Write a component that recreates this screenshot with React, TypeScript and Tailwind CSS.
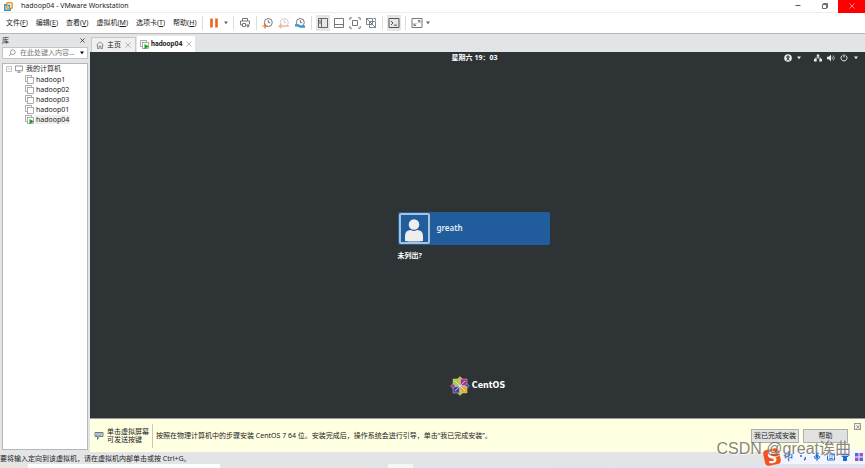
import { useState, ReactNode } from "react"

const menus = [
  { label: "文件", hotkey: "F" },
  { label: "编辑", hotkey: "E" },
  { label: "查看", hotkey: "V" },
  { label: "虚拟机", hotkey: "M" },
  { label: "选项卡", hotkey: "T" },
  { label: "帮助", hotkey: "H" },
]

const machines = ["hadoop1", "hadoop02", "hadoop03", "hadoop01", "hadoop04"]

type SvgProps = {
  children: ReactNode
  className?: string
  box?: string
}

function Svg({ children, className = "size-3", box = "0 0 12 12" }: SvgProps) {
  return (
    <svg viewBox={box} className={`shrink-0 ${className}`} fill="none" stroke="currentColor" strokeWidth="1" aria-hidden="true">
      {children}
    </svg>
  )
}

function Caret({ className = "text-[#666]" }: { className?: string }) {
  return (
    <Svg className={`h-1 w-1.5 ${className}`} box="0 0 6 4">
      <path d="M1 .5h4L3 3.2z" fill="currentColor" stroke="none" />
    </Svg>
  )
}

function Cross({ className = "size-1.5 text-[#aaa]" }: { className?: string }) {
  return (
    <Svg className={className} box="0 0 6 6">
      <path d="M.5.5l5 5M5.5.5l-5 5" strokeWidth=".9" />
    </Svg>
  )
}

function VmIcon({ running = false }: { running?: boolean }) {
  return (
    <Svg className="size-[9px] text-[#888]" box="0 0 9 9">
      <path d="M2 6.5H.5v-6h6V2" strokeWidth=".7" />
      <rect x="2.5" y="2.5" width="6" height="6" fill="#fff" strokeWidth=".7" />
      {running && <path d="M4.5 4L9 6.5 4.5 9z" fill="#18a018" stroke="none" />}
    </Svg>
  )
}

function Clock({ children, className = "text-[#777]" }: { children?: ReactNode; className?: string }) {
  return (
    <Svg className={`size-3 ${className}`}>
      <circle cx="6.3" cy="5.5" r="4" />
      <path d="M6.3 3v2.7h2" />
      {children}
    </Svg>
  )
}

type ToolProps = {
  label: string
  children: ReactNode
  active?: boolean
}

function Tool({ label, children, active = false }: ToolProps) {
  return (
    <button
      type="button"
      aria-label={label}
      className={`flex h-4 items-center justify-center ${active ? "mx-px w-3.5 bg-[#e6e6e6]" : "w-4"}`}
    >
      {children}
    </button>
  )
}

function Divider() {
  return <span className="mx-[3px] h-3.5 w-px shrink-0 bg-[#ddd]" />
}

function TitleBar() {
  return (
    <header className="flex h-[13px] shrink-0 items-center border-b border-[#eee] bg-white pl-1">
      <Svg className="size-[9px]" box="0 0 9 9">
        <rect x="2.8" y=".8" width="5.4" height="5.4" rx=".8" stroke="#f3981c" strokeWidth="1.5" />
        <path d="M2.5 2.8H.8v5.4h5.4V6.5M3.5 3.5h2v2" stroke="#2b8fc4" strokeWidth="1.4" />
      </Svg>
      <h1 className="ml-2 flex-1 leading-[10px]">hadoop04 - VMware Workstation</h1>
      <button type="button" aria-label="最小化" className="flex h-3 w-[27px] items-center justify-center">
        <Svg className="size-1.5 text-[#555]" box="0 0 6 6">
          <path d="M.5 2.5h5" />
        </Svg>
      </button>
      <button type="button" aria-label="还原" className="flex h-3 w-[27px] items-center justify-center">
        <Svg className="size-1.5 text-[#444]" box="0 0 6 6">
          <path d="M.5 1.5h4v4h-4zM1.5 1V.5h4v4H5" strokeWidth=".8" />
        </Svg>
      </button>
      <button type="button" aria-label="关闭" className="flex h-[13px] w-[27px] items-center justify-center bg-[#fb0000]">
        <Cross className="size-1.5 text-[#ff9c9c]" />
      </button>
    </header>
  )
}

function MenuBar() {
  return (
    <div className="flex h-[21px] shrink-0 items-center border-b border-[#b5b5b5] bg-white pl-1.5">
      <nav className="flex gap-2 pr-0.5">
        {menus.map((menu) => (
          <button key={menu.hotkey} type="button" className="whitespace-nowrap">
            {menu.label}(<u>{menu.hotkey}</u>)
          </button>
        ))}
      </nav>
      <Divider />
      <div className="flex items-center">
        <Tool label="挂起">
          <Svg className="size-3 text-[#f0641e]">
            <path d="M3.5 1.5v9M8.5 1.5v9" strokeWidth="2.6" />
          </Svg>
        </Tool>
        <span className="px-px">
          <Caret />
        </span>
        <Divider />
        <Tool label="发送 Ctrl+Alt+Del">
          <Svg className="size-3 text-[#777]">
            <path d="M3.5 4V1.5h5V4M3.5 8h-2V4h9v3M3.5 6.5h3v3h-3z" />
            <path d="M7 7.5h4L9 11z" fill="currentColor" stroke="none" />
          </Svg>
        </Tool>
        <Divider />
        <Tool label="拍摄快照">
          <Clock>
            <path d="M.5 9h5M3 6.5v5" stroke="#f0641e" strokeWidth="1.2" />
          </Clock>
        </Tool>
        <Tool label="恢复快照">
          <Clock className="text-[#ccc]">
            <path d="M1 9.2h10M3.5 7L1 9.2l2.5 2" stroke="#f5b195" strokeWidth="1.2" />
          </Clock>
        </Tool>
        <Tool label="管理快照">
          <Clock>
            <path d="M1 8.3h3.5l1.5 1.4h5" stroke="#2c97d3" strokeWidth="2.2" />
          </Clock>
        </Tool>
        <Divider />
        <Tool label="显示库" active>
          <Svg className="size-3 text-[#666]">
            <path d="M1.5 1.5h9v9h-9zM4.5 1.5v9M2 4h2M2 6h2" />
          </Svg>
        </Tool>
        <Tool label="缩略图栏">
          <Svg className="size-3 text-[#777]">
            <path d="M1.5 1.5h9v9h-9zM1.5 7.5h9" />
          </Svg>
        </Tool>
        <Tool label="全屏">
          <Svg className="size-3 text-[#777]">
            <path d="M3.5 3.5h5v5h-5zM3 .8H.8V3M9 .8h2.2V3M3 11.2H.8V9M9 11.2h2.2V9" />
          </Svg>
        </Tool>
        <Tool label="Unity 模式">
          <Svg className="size-3 text-[#6f7880]">
            <path d="M1.5 1.5h6v6h-6zM4.5 4.5h6v6h-6zM1 1l9.5 9.5M8.5 1.5h2v2" strokeWidth=".9" />
          </Svg>
        </Tool>
        <Divider />
        <Tool label="控制台视图" active>
          <Svg className="size-3 text-[#555]">
            <path d="M1 1.5h10v9H1zM3 4l2 2-2 2M6 8.2h3" />
          </Svg>
        </Tool>
        <Divider />
        <Tool label="自由拉伸">
          <Svg className="size-3 text-[#777]">
            <path d="M1 1.5h10v9H1zM6.8 3.5H9v2.2M9 3.5L6.8 5.7M5.2 8.5H3V6.3M3 8.5l2.2-2.2" />
          </Svg>
        </Tool>
        <Caret />
      </div>
    </div>
  )
}

function Library() {
  const [search, setSearch] = useState("")

  return (
    <aside className="flex w-[90px] shrink-0 flex-col pb-0.5">
      <div className="flex h-[13px] items-center justify-between pr-[5px] pl-0.5">
        <h2>库</h2>
        <button type="button" aria-label="关闭库">
          <Cross className="size-[5px] text-[#222]" />
        </button>
      </div>
      <label className="mx-0.5 flex h-3 shrink-0 items-center border border-[#c5c5c5] bg-white pr-0.5 pl-[5px]">
        <Svg className="size-2 text-[#888]" box="0 0 8 8">
          <circle cx="4.8" cy="3.2" r="2.4" strokeWidth=".8" />
          <path d="M3 5L.8 7.2" strokeWidth=".8" />
        </Svg>
        <input
          type="text"
          aria-label="搜索"
          value={search}
          onChange={(e) => setSearch(e.target.value)}
          placeholder="在此处键入内容..."
          className="ml-1 min-w-0 flex-1 outline-none placeholder:text-[#777]"
        />
        <Caret className="text-black" />
      </label>
      <div className="mx-0.5 mt-1 flex-1 border border-[#b4b7bc] bg-white pl-[3px]">
        <div className="flex h-2.5 items-center">
          <Svg className="size-1.5 text-[#aaa]" box="0 0 6 6">
            <path d="M.5.5h5v5h-5zM1.5 3h3" strokeWidth=".7" />
          </Svg>
          <Svg className="mx-[3px] size-2 text-[#777]" box="0 0 8 8">
            <path d="M.4 1h7.2v4.7H.4zM4 5.7V7M2.3 7.3h3.4" strokeWidth=".8" />
          </Svg>
          我的计算机
        </div>
        <ul className="pl-[19px]">
          {machines.map((name) => (
            <li key={name}>
              <button type="button" className="flex h-2.5 items-center gap-px">
                <VmIcon running={name === "hadoop04"} />
                <span className={`px-px leading-[9px] ${name === "hadoop04" ? "bg-[#eee]" : ""}`}>{name}</span>
              </button>
            </li>
          ))}
        </ul>
      </div>
    </aside>
  )
}

function Tabs() {
  return (
    <div className="flex h-[18px] shrink-0 items-end gap-px pl-px">
      <div className="flex h-[15px] items-center border border-b-0 border-[#c8c8c8] bg-[#f0f0f0] px-1">
        <button type="button" className="flex items-center gap-[3px]">
          <Svg className="size-2 text-[#777]" box="0 0 8 8">
            <path d="M.5 4L4 .8 7.5 4M1.5 3.5v4h1.7V5h1.6v2.5h1.7v-4" strokeWidth=".8" />
          </Svg>
          主页
        </button>
        <button type="button" aria-label="关闭主页" className="ml-1">
          <Cross />
        </button>
      </div>
      <div className="flex h-4 items-center bg-white px-[3px]">
        <button type="button" className="flex items-center gap-0.5 font-['Roboto',sans-serif] font-bold">
          <VmIcon running />
          hadoop04
        </button>
        <button type="button" aria-label="关闭 hadoop04" className="ml-1">
          <Cross />
        </button>
      </div>
    </div>
  )
}

const petals = [
  { angle: 0, square: "#a6cf35", diamond: "#efa724" },
  { angle: 90, square: "#a13a8f", diamond: "#4b4699" },
  { angle: 180, square: "#efa724", diamond: "#a6cf35" },
  { angle: 270, square: "#4b4699", diamond: "#a13a8f" },
]

function CentosLogo() {
  return (
    <Svg className="size-5" box="-10 -10 20 20">
      {petals.map((petal) => (
        <g key={petal.angle} transform={`rotate(${petal.angle})`}>
          <path d="M-7-7H-.5v6.5H-7z" fill={petal.square} stroke="#ddd" strokeWidth=".4" />
          <path d="M-2.4-7L0-9.5 2.4-7 0-4.6z" fill={petal.diamond} stroke="#ddd" strokeWidth=".4" />
        </g>
      ))}
      <path d="M-5-5L5 5M5-5L-5 5M0-5V5M-5 0H5" stroke="#eee" strokeWidth=".7" />
    </Svg>
  )
}

function GuestScreen() {
  return (
    <section className="flex flex-1 flex-col bg-[#2e3436] text-white">
      <div className="grid h-3 grid-cols-3 items-center pr-1.5">
        <span />
        <time className="text-center font-bold">星期六 19：03</time>
        <div className="flex items-center justify-end">
          <button type="button" aria-label="辅助功能" className="flex items-center gap-1">
            <Svg className="size-2" box="0 0 8 8">
              <circle cx="4" cy="4" r="3.8" fill="#eee" stroke="none" />
              <path d="M4 1.3v3M2 3h4M4 4L2.8 6.5M4 4l1.2 2.5" stroke="#2e3436" />
            </Svg>
            <Caret className="text-[#eee]" />
          </button>
          <button type="button" aria-label="系统菜单" className="ml-3 flex items-center gap-[5px]">
            <Svg className="size-2" box="0 0 8 8">
              <path d="M2.8.5h2.4v2.3H2.8zM0 5h2.7v2.5H0zM5.3 5H8v2.5H5.3z" fill="#eee" stroke="none" />
              <path d="M4 2.5V4M1.3 5.5V4h5.4v1.5" stroke="#eee" strokeWidth=".8" />
            </Svg>
            <Svg className="size-2" box="0 0 8 8">
              <path d="M0 2.8h1.7L4 .8v6.4l-2.3-2H0z" fill="#eee" stroke="none" />
              <path d="M5 2.7q1 1.3 0 2.6M6.3 1.5q2 2.5 0 5" stroke="#ccc" strokeWidth=".8" />
            </Svg>
            <Svg className="size-2" box="0 0 8 8">
              <path d="M2.5 1.3a3 3 0 1 0 3 0M4 .3v3" stroke="#eee" />
            </Svg>
            <Caret className="text-[#eee]" />
          </button>
        </div>
      </div>
      <div className="flex flex-1 flex-col items-center justify-center pt-8 pr-2">
        <div className="w-[152px]">
          <button type="button" className="flex w-full items-center gap-[7px] rounded-xs bg-[#215d9c] p-px text-left text-[8px] font-semibold text-[#e4ebf3]">
            <span className="flex size-[31px] items-end justify-center rounded-xs border-2 border-[#a9c2dc]">
              <Svg className="size-6" box="0 0 24 24">
                <circle cx="12" cy="6.5" r="5.3" fill="#eee" stroke="none" />
                <path d="M3 23v-5q0-6 6-6 3 2 6 0 6 0 6 6v5q-9 1-18 0z" fill="#eee" stroke="none" />
              </Svg>
            </span>
            greath
          </button>
          <button type="button" className="mt-1.5 block font-bold">未列出?</button>
        </div>
      </div>
      <div className="flex items-center justify-center gap-0.5 pb-[22px] font-['DejaVu_Sans',sans-serif] text-[8px] font-bold">
        <CentosLogo />
        CentOS
      </div>
    </section>
  )
}

function InstallHint() {
  return (
    <section className="relative flex h-[34px] shrink-0 items-center border-t border-[#999] bg-[#ffffe1] pr-[17px] pl-1">
      <Svg className="size-2.5 text-[#69808c]" box="0 0 10 10">
        <path d="M1 1.5h8v4H5L3.5 8.5v-3H1z" fill="#d2dde0" />
        <path d="M2 3h6M2 4.5h5" strokeWidth=".6" />
      </Svg>
      <p className="mx-[3px] leading-2">
        单击虚拟屏幕
        <br />
        可发送按键
      </p>
      <span className="mr-[3px] h-6 w-px bg-[#c9c9b5]" />
      <p className="flex-1">按照在物理计算机中的步骤安装 CentOS 7 64 位。安装完成后，操作系统会进行引导，单击“我已完成安装”。</p>
      <div className="flex gap-1">
        <button type="button" className="h-3.5 w-12 border border-[#adadad] bg-[#e1e1e1] whitespace-nowrap">我已完成安装</button>
        <button type="button" className="h-3.5 w-[45px] border border-[#adadad] bg-[#e1e1e1]">帮助</button>
      </div>
      <button type="button" aria-label="关闭提示" className="absolute top-1 right-1 flex size-[7px] items-center justify-center border border-[#999] bg-[#eee]">
        <Cross className="size-1 text-[#666]" />
      </button>
    </section>
  )
}

function InputMethodBar() {
  return (
    <div className="absolute right-0 bottom-[3px] flex items-center text-[#176fd6]">
      <span className="z-10 flex size-4 -rotate-12 items-center justify-center rounded-sm bg-[#f4511e] text-[16px] leading-4 font-bold text-white">S</span>
      <div className="flex h-3.5 items-center gap-1.5 bg-[#f4f5fc] pr-0.5 pl-1">
        <span className="text-[9px] font-bold">中</span>
        <Svg className="size-2" box="0 0 8 8">
          <circle cx="2" cy="3" r="1" fill="currentColor" stroke="none" />
          <path d="M6 4q1 2-1 3" strokeWidth="1.4" />
        </Svg>
        <Svg className="size-2" box="0 0 8 8">
          <rect x="2.5" y="0" width="3" height="5" rx="1.5" fill="currentColor" stroke="none" />
          <path d="M1.2 3.2q0 2.8 2.8 2.8t2.8-2.8M4 6v2" />
        </Svg>
        <Svg className="size-2" box="0 0 8 8">
          <path d="M.5 1h7v6h-7zM2 3h1M3.7 3h1M5.4 3h1M2 5.3h4" />
        </Svg>
        <Svg className="size-2" box="0 0 8 8">
          <path d="M2.3.8q1.7 1 3.4 0L8 2.2 7 4H6v4H2V4H1L0 2.2z" fill="currentColor" stroke="none" />
        </Svg>
        <Svg className="size-2" box="0 0 8 8">
          <path d="M0 0h3.5v3.5H0zM4.5 4.5H8V8H4.5z" fill="#4b6cd8" stroke="none" />
          <path d="M4.5 0H8v3.5H4.5zM0 4.5h3.5V8H0z" fill="#a150c6" stroke="none" />
        </Svg>
      </div>
    </div>
  )
}

export default function App() {
  return (
    <div className="relative flex h-screen flex-col overflow-hidden bg-[#e3e4e6] font-['Noto_Sans','Noto_Sans_CJK_SC',sans-serif] text-[7px] leading-[10px] text-[#222]">
      <TitleBar />
      <MenuBar />
      <div className="flex min-h-0 flex-1">
        <Library />
        <main className="flex min-w-0 flex-1 flex-col">
          <Tabs />
          <GuestScreen />
          <InstallHint />
        </main>
      </div>
      <footer className="shrink-0">
        <p className="h-3 leading-[14px]">要将输入定向到该虚拟机，请在虚拟机内部单击或按 Ctrl+G。</p>
        <div className="flex h-1 bg-linear-to-r from-[#e9e4e0] to-[#dfe2ef]">
          <span className="ml-7 w-48 bg-white" />
          <span className="ml-42 w-[25px] bg-[#f6f6f6]" />
        </div>
      </footer>
      <InputMethodBar />
      <p className="pointer-events-none absolute right-3.5 bottom-2.5 z-20 font-['Liberation_Sans','Noto_Sans_CJK_SC',sans-serif] text-[16px] leading-[18px] text-[#666]/80 text-shadow-[1px_1px_0_#ffffff99]">
        CSDN @great诶曲
      </p>
    </div>
  )
}
